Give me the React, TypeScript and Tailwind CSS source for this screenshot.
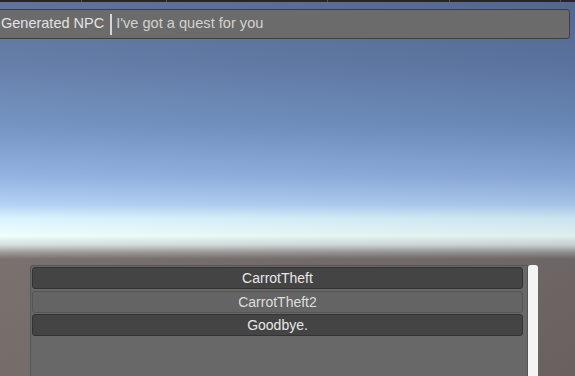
const tabs = [82, 85, 161, 122, 111];

const options = [
  { label: "CarrotTheft", hover: false },
  { label: "CarrotTheft2", hover: true },
  { label: "Goodbye.", hover: false },
];

export default function App() {
  return (
    <div className="h-[376px] w-[575px] overflow-hidden font-['Liberation_Sans',Arial,sans-serif] bg-[linear-gradient(to_right,rgba(255,255,255,0.05),rgba(40,50,70,0.08)),linear-gradient(to_bottom,#566b95_0px,#5d77a3_60px,#6e8ebe_125px,#8dade0_175px,#b0d0f3_205px,#d8f2fd_218px,#effefc_236px,#d2dcda_245px,#9a9896_252px,#726a67_259px,#6d6562_376px)]">
      {/* window strip */}
      <div className="flex h-[2px] bg-[#262626]">
        {tabs.map((w, i) => (
          <div key={i} className="h-full border-r border-[#505050]" style={{ width: w }} />
        ))}
      </div>

      {/* speaker line */}
      <div className="mt-[7px] -ml-[3px] mr-[5px] flex h-[30px] items-center rounded-[3px] border border-[#3e3e3e] bg-[#6b6b6b] pl-[3px]">
        <span className="text-[14.5px] text-[#e2e2e2]">Generated NPC</span>
        <span className="ml-[6px] mr-[4px] h-[21px] w-[2px] bg-[#d6d6d6]" />
        <span className="text-[14.6px] text-[#d2d2d2]">I've got a quest for you</span>
      </div>

      {/* dialogue options */}
      <div className="mt-[226px] ml-[30px] flex">
        <div className="flex h-[112px] w-[498px] flex-col gap-[1.5px] rounded-tl-[3px] border border-[#555555] bg-[#686868] pt-[1px] pl-[1px] pr-[4px]">
          {options.map((o) => (
            <button
              key={o.label}
              className={`flex h-[22px] items-center justify-center rounded-[3px] border pt-[1px] text-[14px] ${
                o.hover
                  ? "border-[#555555] bg-[#646464] text-[#dedede]"
                  : "border-[#333333] bg-[#444444] text-[#e8e8e8]"
              }`}
            >
              {o.label}
            </button>
          ))}
        </div>
        <div className="h-[112px] w-[10px] rounded-t-[3px] bg-[#f4f4f4]" />
      </div>
    </div>
  );
}
